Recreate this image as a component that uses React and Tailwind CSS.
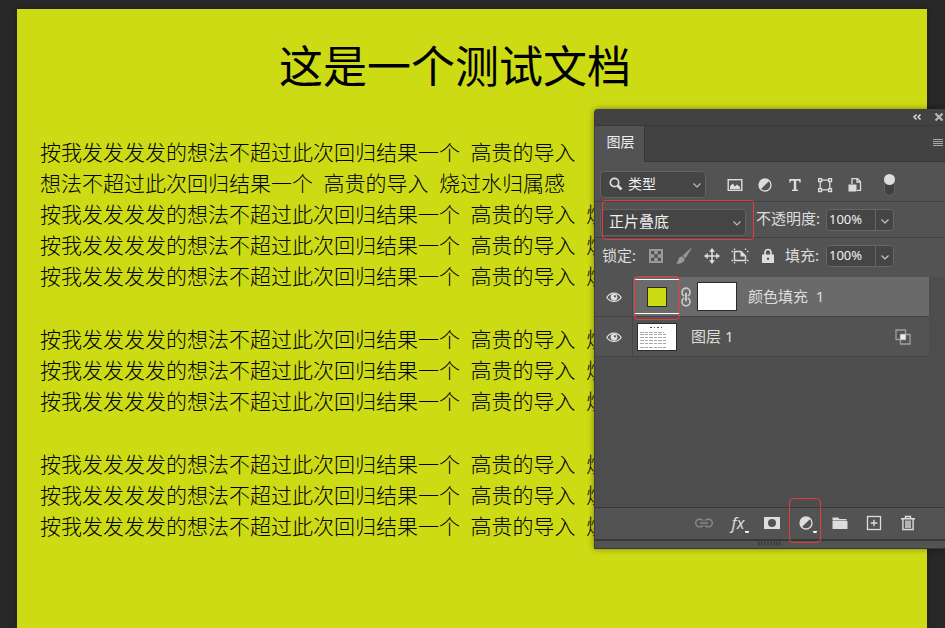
import { useState } from "react";

const LINE = "按我发发发发的想法不超过此次回归结果一个\u00a0\u00a0高贵的导入\u00a0\u00a0烧";

const paragraphs = [
  [
    "按我发发发发的想法不超过此次回归结果一个\u00a0\u00a0高贵的导入",
    "想法不超过此次回归结果一个\u00a0\u00a0高贵的导入\u00a0\u00a0烧过水归属感",
    LINE,
    LINE,
    LINE,
  ],
  [LINE, LINE, LINE],
  [LINE, LINE, LINE],
];

const Icon = ({ size = 16, className = "", children }) => (
  <svg
    xmlns="http://www.w3.org/2000/svg"
    width={size}
    height={size}
    viewBox={`0 0 ${size} ${size}`}
    fill="none"
    stroke="currentColor"
    className={className}
    aria-hidden="true"
  >
    {children}
  </svg>
);

const Chevron = ({ className }) => (
  <Icon size={10} className={className}>
    <path d="M1.5 3.5 5 7l3.5-3.5" strokeWidth="1.2" />
  </Icon>
);

const ImageIcon = () => (
  <Icon>
    <rect x="1.2" y="2.7" width="13.6" height="10.6" strokeWidth="1.4" />
    <path d="M3 12V9.5L5.5 6.500 8 9.500l2-2 3 2.500v2z" fill="currentColor" stroke="none" />
  </Icon>
);

const AdjustIcon = () => (
  <Icon>
    <circle cx="8" cy="8" r="6" strokeWidth="1.3" />
    <path d="M12.300 3.700A6 6 0 0 0 3.700 12.300z" fill="currentColor" stroke="none" />
  </Icon>
);

const TypeIcon = () => (
  <Icon>
    <path d="M2.300 2h11.400v3.500h-1.200L12 3.800H9.200v8.600l1.900.4V14H4.900v-1.200l1.900-.4V3.800H4l-.5 1.700H2.300z" fill="currentColor" stroke="none" />
  </Icon>
);

const ShapeIcon = () => (
  <Icon>
    <path d="M4 3.200h8M4 12.800h8M3.200 4v8M12.800 4v8" strokeWidth="1.3" />
    {[[1, 1], [11, 1], [1, 11], [11, 11]].map(([x, y]) => (
      <rect key={`${x}-${y}`} x={x + 0.6} y={y + 0.6} width="3" height="3" fill="#777777" strokeWidth="1.2" />
    ))}
  </Icon>
);

const SmartIcon = () => (
  <Icon>
    <path d="M5 7V1.700h5.500l3 3v8.600H10M10 1.700V5h3.500" strokeWidth="1.3" />
    <rect x="1.500" y="7.500" width="8" height="7" fill="currentColor" stroke="none" />
  </Icon>
);

const CheckerIcon = () => (
  <Icon>
    <path d="M1 1h14v14H1z" fill="currentColor" stroke="none" />
    <path d="M3 3h3.300v3.300H3zM9.700 3H13v3.300H9.700zM6.300 6.300h3.400v3.400H6.300zM3 9.700h3.300V13H3zM9.700 9.700H13V13H9.700z" fill="#535353" stroke="none" />
  </Icon>
);

const BrushIcon = () => (
  <Icon>
    <path d="M15.900.1 9.300 10.300 6.800 7.800 13.500 1.200zM6 8.300l2.700 2.700C8.700 14.200 5 15.900.3 15.700 2.600 14 1.600 8.800 6 8.300z" fill="currentColor" stroke="none" />
  </Icon>
);

const MoveIcon = () => (
  <Icon>
    <path d="M8 2v12M2 8h12" strokeWidth="1.600" />
    <path d="M8 0l3 3.800H5zM8 16l3-3.800H5zM0 8l3.800-3v6zM16 8l-3.800-3v6z" fill="currentColor" stroke="none" />
  </Icon>
);

const ArtboardIcon = () => (
  <Icon size={18}>
    <path d="M3.500 4.500H10l4.500 4.500v4.500h-11z" strokeWidth="1.500" />
    <path d="M9.500 4.500v5h5z" fill="currentColor" stroke="none" />
    <path d="M.5 4.500H2M3.500 1.500V3M14.500 1.500V3M16 4.500h1.500M.5 13.500H2M3.500 15v1.500M14.500 15v1.500M16 13.500h1.500" strokeWidth="1.300" />
  </Icon>
);

const LockIcon = () => (
  <Icon>
    <path d="M5 7V4.500a3 3 0 0 1 6 0V7" strokeWidth="1.700" />
    <path fillRule="evenodd" d="M2 6.500h12V15H2zM8 9.500a1.200 1.200 0 1 0 0 2.400 1.200 1.200 0 0 0 0-2.400z" fill="currentColor" stroke="none" />
  </Icon>
);

const EyeIcon = () => (
  <Icon className="text-[#dddddd]">
    <path d="M.8 8.500C4.200 2.700 11.800 2.700 15.200 8.500 11.800 13.700 4.200 13.700.8 8.500z" strokeWidth="1.300" />
    <circle cx="8" cy="8.200" r="3.400" fill="currentColor" stroke="none" />
    <circle cx="9" cy="7.300" r="1.100" fill="#535353" stroke="none" />
  </Icon>
);

const ChainIcon = () => (
  <svg width="12" height="20" viewBox="0 0 12 20" fill="none" stroke="#c8c8c8" strokeLinecap="round" aria-hidden="true">
    <path d="M3.600 8.600C2.300 8 2 6.800 2 5.200a4 4 0 0 1 8 0c0 1.600-.3 2.800-1.600 3.400M3.600 11.400C2.300 12 2 13.200 2 14.800a4 4 0 0 0 8 0c0-1.600-.3-2.800-1.600-3.400" strokeWidth="1.700" />
    <path d="M6 6.500v7" strokeWidth="2" />
  </svg>
);

const LinkIcon = () => (
  <Icon size={18}>
    <path d="M8 6.500C7 5.200 5.500 5.200 4.500 5.200a3.800 3.800 0 0 0 0 7.600c1.500 0 2.700-.2 3.500-1.300M10 6.500c1-1.300 2.500-1.300 3.500-1.300a3.800 3.800 0 0 1 0 7.600c-1.500 0-2.700-.2-3.500-1.300M5 9h8" strokeWidth="1.500" />
  </Icon>
);

const MaskIcon = () => (
  <Icon>
    <path fillRule="evenodd" d="M0 2h16v12H0zM8 4a4 4 0 1 0 0 8 4 4 0 0 0 0-8z" fill="currentColor" stroke="none" />
  </Icon>
);

const FolderIcon = () => (
  <Icon>
    <path d="M.5 2.500h5.800l1 1.500h7.200V5.500H.5zM.5 6h15v8H.5z" fill="currentColor" stroke="none" />
  </Icon>
);

const NewIcon = () => (
  <Icon>
    <rect x="1.500" y="1.500" width="13" height="13" strokeWidth="1.300" />
    <path d="M8 4.700v6.600M4.700 8h6.600" strokeWidth="1.400" />
  </Icon>
);

const TrashIcon = () => (
  <Icon>
    <path d="M1 3.700h14M5.500 3.500V1.500h5v2M2.900 4v10.500h10.200V4M6 5.500v7.500M8 5.500v7.500M10 5.500v7.500" strokeWidth="1.400" />
  </Icon>
);

const CornerMark = () => (
  <svg width="4" height="2" viewBox="0 0 4 2" className="absolute right-[6px] bottom-0" aria-hidden="true">
    <path d="M0 0h4v1L3 2H1L0 1z" fill="#ffffff" />
  </svg>
);

const Percent = ({ id, label, value, onChange }) => (
  <div className="flex h-[22px] rounded-sm border border-[#666666] bg-[#454545]">
    <input
      id={id}
      className="w-12 min-w-0 bg-transparent pl-0.5 text-[13px] text-[#f0f0f0] outline-none"
      type="text"
      value={value}
      onChange={(ev) => onChange(ev.target.value)}
    />
    <button type="button" aria-label={label} className="flex w-[18px] items-center justify-center border-l border-[#666666] pt-0.5 text-[#c8c8c8]">
      <Chevron />
    </button>
  </div>
);

const filters = [
  ["像素", ImageIcon],
  ["调整", AdjustIcon],
  ["文字", TypeIcon],
  ["形状", ShapeIcon],
  ["智能对象", SmartIcon],
];

const locks = [
  ["锁定透明像素", CheckerIcon, "text-[#999999]"],
  ["锁定图像像素", BrushIcon, "text-[#999999]"],
  ["锁定位置", MoveIcon, "text-[#dddddd]"],
  ["锁定画板", ArtboardIcon, "text-[#dddddd]"],
  ["锁定全部", LockIcon, "text-[#dddddd]"],
];

const PageThumb = () => (
  <svg width="38" height="26" viewBox="0 0 38 26" className="bg-white" aria-hidden="true">
    <path d="M12 3.500h14" stroke="#555555" strokeDasharray="2 2 1 2" />
    <path d="M2 8.500h24M2 10.500h26M2 13.500h26M2 16.500h26M2 19.500h26M2 23.500h26" stroke="#a8a8a8" strokeDasharray="4 1 3 1" />
  </svg>
);

const LayersPanel = () => {
  const [opacity, setOpacity] = useState("100%");
  const [fill, setFill] = useState("100%");

  return (
    <aside className="absolute top-[109px] right-0 w-[351px] rounded-tl border-l border-[#3c3c3c] bg-[#535353] font-['Noto_Sans','Noto_Sans_CJK_SC',sans-serif] text-[15px] text-[#dddddd] shadow-[0_0_6px_rgba(0,0,0,0.4)]">
      <div className="flex h-[17px] items-center justify-end gap-3 rounded-tl border-b border-[#383838] bg-[#424242]">
        <button type="button" aria-label="折叠">
          <Icon size={10}>
            <path d="M4.500 2.500 2 5l2.500 2.500M8.500 2.500 6 5l2.500 2.500" strokeWidth="1.500" />
          </Icon>
        </button>
        <button type="button" aria-label="关闭" className="pr-px text-[#b8b8b8]">
          <Icon size={10}>
            <path d="M1.500 1.500l7 7M8.500 1.500l-7 7" strokeWidth="2.200" />
          </Icon>
        </button>
      </div>

      <div className="flex h-9 items-stretch justify-between bg-[#424242]">
        <button type="button" className="w-[50px] border-r border-[#383838] bg-[#535353] pb-1 pl-0.5 text-sm text-[#f0f0f0]">图层</button>
        <div className="flex grow items-center justify-end border-b border-[#383838]">
          <button type="button" aria-label="菜单" className="pb-0.5 text-[#a8a8a8]">
            <Icon size={12}>
              <path d="M0 2.500h10M0 4.500h10M0 6.500h10M0 8.500h10" />
            </Icon>
          </button>
        </div>
      </div>

      <div className="flex h-10 items-center border-b border-[#414141] pt-1.5 pl-[5px]">
        <div className="relative">
          <select aria-label="类型" className="h-[27px] w-[106px] appearance-none rounded-sm border border-[#626262] bg-[#454545] pb-0.5 pl-[27px] text-sm text-[#f0f0f0]">
            <option>类型</option>
          </select>
          <Icon className="pointer-events-none absolute top-[5px] left-2 text-[#dddddd]">
            <circle cx="6.500" cy="6.500" r="4.200" strokeWidth="1.700" />
            <path d="M9.500 9.500l4 4" strokeWidth="2.600" />
          </Icon>
          <Chevron className="pointer-events-none absolute top-[9px] right-1 text-[#bbbbbb]" />
        </div>
        <div className="ml-3.5 flex">
          {filters.map(([name, Glyph]) => (
            <button key={name} type="button" aria-label={name} className="flex w-[30px] justify-center">
              <Glyph />
            </button>
          ))}
        </div>
        <button type="button" aria-label="筛选开关" className="ml-3.5 flex h-[22px] w-[11px] items-start justify-center rounded-full border border-[#626262] bg-[#414141]">
          <span className="-mt-px size-[11px] shrink-0 rounded-full bg-[#dddddd]" />
        </button>
      </div>

      <div className="flex h-9 items-center border-b border-[#414141] pl-[5px]">
        <div className="relative mt-1.5">
          <select aria-label="混合模式" className="h-[27px] w-[146px] appearance-none rounded-sm border border-[#626262] bg-[#454545] pb-1 pl-2 text-[#f0f0f0]">
            <option>正片叠底</option>
          </select>
          <Chevron className="pointer-events-none absolute top-[9px] right-1 text-[#bbbbbb]" />
          <span className="pointer-events-none absolute -top-[9px] left-0.5 h-10 w-[152px] rounded-sm border border-[#e83c3c]" />
        </div>
        <label htmlFor="opacity" className="mr-1.5 ml-2.5 w-16 pb-0.5 whitespace-nowrap">不透明度:</label>
        <Percent id="opacity" label="不透明度选项" value={opacity} onChange={setOpacity} />
      </div>

      <div className="flex h-[39px] items-center pb-1 pl-[7px]">
        <span className="w-10 whitespace-nowrap">锁定:</span>
        <div className="flex">
          {locks.map(([name, Glyph, tone]) => (
            <button key={name} type="button" aria-label={name} className={`flex w-7 items-center justify-center ${tone}`}>
              <Glyph />
            </button>
          ))}
        </div>
        <label htmlFor="fill" className="mr-1.5 ml-[3px] w-[35px] whitespace-nowrap">填充:</label>
        <Percent id="fill" label="填充选项" value={fill} onChange={setFill} />
      </div>

      <div className="h-[230px] bg-[#4d4d4d] pr-4">
        <div className="flex h-10 items-stretch border-b border-[#464646]">
          <button type="button" aria-label="显示颜色填充 1" className="flex w-[38px] items-center justify-center border-r border-[#464646] bg-[#535353]">
            <EyeIcon />
          </button>
          <div className="flex grow items-center bg-[#6a6a6a] pl-0.5">
            <div className="relative flex h-[35px] w-11 items-center justify-center border-y border-white">
              <span className="size-5 border border-[#2b2b2b] bg-[#cddb15]" />
              <span className="pointer-events-none absolute -inset-x-px -top-1 -bottom-[7px] rounded-sm border border-[#e83c3c]" />
            </div>
            <span className="flex w-[18px] pl-px">
              <ChainIcon />
            </span>
            <span className="h-[29px] w-10 border border-[#2b2b2b] bg-white" />
            <span className="ml-[11px]">颜色填充&nbsp; 1</span>
          </div>
        </div>
        <div className="flex h-10 items-stretch border-b border-[#464646] bg-[#535353]">
          <button type="button" aria-label="显示图层 1" className="flex w-[38px] items-center justify-center border-r border-[#464646]">
            <EyeIcon />
          </button>
          <div className="flex grow items-center pl-1">
            <span className="border border-[#2b2b2b]">
              <PageThumb />
            </span>
            <span className="ml-3.5 grow">图层 1</span>
            <Icon className="mr-[18px] text-[#a0a0a0]">
              <path d="M1 1h9.500v9.500H1zM5.500 5.500H15V15H5.500z" strokeWidth="1.300" />
              <path d="M5.500 5.500h5v5h-5z" fill="#eeeeee" stroke="none" />
            </Icon>
          </div>
        </div>
      </div>

      <div className="flex h-[34px] items-center justify-end border-t border-b-2 border-[#383838] pr-5 pb-0.5">
        <button type="button" aria-label="链接图层" className="flex w-[34px] justify-center text-[#8a8a8a]"><LinkIcon /></button>
        <button type="button" aria-label="图层样式" className="relative w-[34px] text-base leading-5 italic">fx<CornerMark /></button>
        <button type="button" aria-label="添加蒙版" className="flex w-[34px] justify-center"><MaskIcon /></button>
        <button type="button" aria-label="新建填充或调整图层" className="relative flex h-5 w-[34px] items-center justify-center">
          <AdjustIcon />
          <CornerMark />
          <span className="pointer-events-none absolute -top-[15px] right-0.5 left-0 h-[45px] rounded-sm border border-[#e83c3c]" />
        </button>
        <button type="button" aria-label="新建组" className="flex w-[34px] justify-center"><FolderIcon /></button>
        <button type="button" aria-label="新建图层" className="flex w-[34px] justify-center"><NewIcon /></button>
        <button type="button" aria-label="删除图层" className="flex w-[34px] justify-center"><TrashIcon /></button>
      </div>
      <div className="flex h-2 justify-center border-b border-[#383838]">
        <svg width="24" height="5" viewBox="0 0 24 5" aria-hidden="true">
          <path d="M0 2.500h24" stroke="#404040" strokeWidth="4" strokeDasharray="2 1" />
        </svg>
      </div>
    </aside>
  );
};

const App = () => (
  <main className="relative flex min-h-screen overflow-hidden bg-[#282828] pt-[9px] pr-[18px] pl-[17px]">
    <article className="min-w-0 grow bg-[#cddb15] pt-9 pr-[57px] pl-[23px] font-['Liberation_Serif','Noto_Sans_CJK_SC',serif] text-black shadow-[0_0_6px_#1c1c1c]">
      <h1 className="text-center text-[44px] leading-12">这是一个测试文档</h1>
      <div className="mt-[45px] flex flex-col gap-8 text-[21px] leading-[31px] font-light whitespace-nowrap">
        {paragraphs.map((lines, i) => (
          <div key={i}>
            {lines.map((line, j) => (
              <p key={j} className="w-max">{line}</p>
            ))}
          </div>
        ))}
      </div>
    </article>
    <LayersPanel />
  </main>
);

export default App;
